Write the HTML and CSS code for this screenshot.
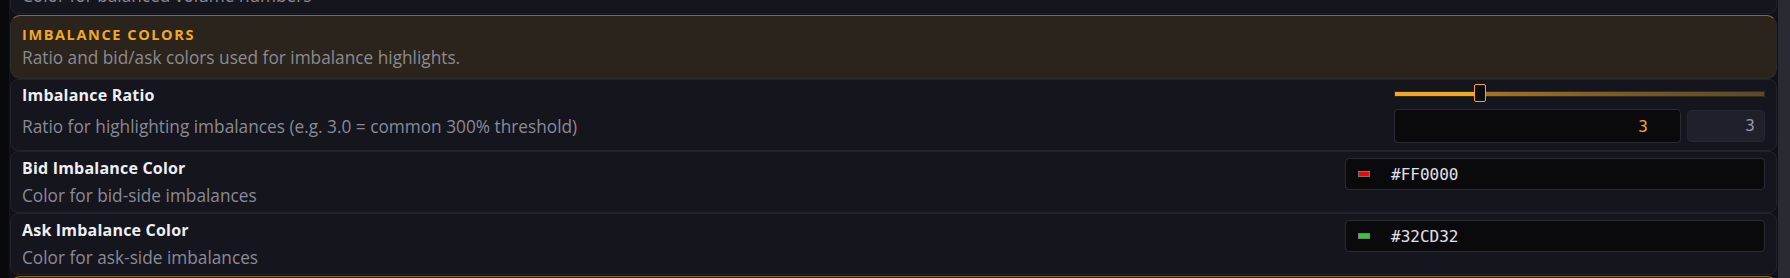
FILE: index.html
```html
<!DOCTYPE html>
<html lang="en">
<head>
    <meta charset="UTF-8">
    <title>Imbalance Colors</title>
    <link rel="stylesheet" href="styles.css">
</head>
<body>
<div class="app">
    <div class="rail"></div>
    <div class="panel">
        <div class="list">
            <div class="row row-cut">
                <div class="info">
                    <div class="name">Balanced Volume Color</div>
                    <div class="desc">Color for balanced volume numbers</div>
                </div>
            </div>

            <div class="section">
                <div class="section-title">Imbalance Colors</div>
                <div class="section-desc">Ratio and bid/ask colors used for imbalance highlights.</div>
            </div>

            <div class="row row-slider">
                <div class="info">
                    <div class="name">Imbalance Ratio</div>
                    <div class="desc">Ratio for highlighting imbalances (e.g. 3.0 = common 300% threshold)</div>
                </div>
                <div class="control slider-control">
                    <div class="slider">
                        <div class="track"></div>
                        <div class="thumb" style="left: 23.2%"></div>
                    </div>
                    <div class="number-line">
                        <input class="number-input" type="text" value="3">
                        <div class="readout">3</div>
                    </div>
                </div>
            </div>

            <div class="row">
                <div class="info">
                    <div class="name">Bid Imbalance Color</div>
                    <div class="desc">Color for bid-side imbalances</div>
                </div>
                <div class="control">
                    <div class="color-input">
                        <span class="swatch swatch-red"></span>
                        <span class="hex">#FF0000</span>
                    </div>
                </div>
            </div>

            <div class="row">
                <div class="info">
                    <div class="name">Ask Imbalance Color</div>
                    <div class="desc">Color for ask-side imbalances</div>
                </div>
                <div class="control">
                    <div class="color-input">
                        <span class="swatch swatch-green"></span>
                        <span class="hex">#32CD32</span>
                    </div>
                </div>
            </div>

            <div class="section">
                <div class="section-title">Volume Colors</div>
                <div class="section-desc">Colors for volume numbers.</div>
            </div>
        </div>
    </div>
    <div class="scrollbar"></div>
</div>
</body>
</html>
```

FILE: styles.css
```css
html, body {
    margin: 0;
    padding: 0;
}
body {
    font-family: "Open Sans", "Noto Sans", sans-serif;
    background-color: #101016;
    color: #ececf1;
}
.app {
    display: flex;
    height: 278px;
    overflow: hidden;
}
.rail {
    width: 9px;
    flex-shrink: 0;
    background-color: #09090b;
    border-right: 1px solid #141419;
}
.panel {
    flex: 1;
    overflow: hidden;
    padding-right: 1px;
}
.list {
    margin-top: -44px;
}
.scrollbar {
    width: 12px;
    flex-shrink: 0;
    background-color: #2a2a33;
}

.row {
    display: flex;
    justify-content: space-between;
    align-items: flex-start;
    padding: 6px 11px 5px 11px;
    background-color: #15151d;
    border: 1px solid #22222b;
    border-radius: 8px;
}
.info {
    display: flex;
    flex-direction: column;
    gap: 7px;
}
.row-cut {
    padding: 5px 11px 6px 11px;
}
.row-cut .info {
    gap: 3px;
}
.row-slider {
    padding: 5px 11px 7px 11px;
}
.row-slider .info {
    gap: 11px;
}
.name {
    font-size: 16px;
    font-weight: 700;
    line-height: 20px;
    letter-spacing: 0.2px;
    color: #eeeef3;
}
.desc {
    font-size: 17.25px;
    line-height: 22px;
    color: #8a8a97;
}

.section {
    margin-top: 1px;
    padding: 10px 11px 9px 11px;
    background-color: #2a241d;
    border: 1px solid #2b2a2d;
    border-top-color: #8a6a2c;
    border-radius: 10px;
}
.section-title {
    font-size: 14.5px;
    font-weight: 700;
    line-height: 18px;
    letter-spacing: 1.6px;
    text-transform: uppercase;
    color: #f4a720;
}
.section-desc {
    margin-top: 3px;
    font-size: 17.25px;
    line-height: 22px;
    color: #8d8a90;
}

.control {
    width: 420px;
    display: flex;
    flex-direction: column;
    align-items: flex-end;
}
.slider-control {
    width: 371px;
    margin-top: -1px;
    gap: 7px;
}
.slider {
    position: relative;
    width: 100%;
    height: 18px;
}
.track {
    margin-top: 7px;
    height: 4px;
    border: 1px solid #2e2a24;
    background: linear-gradient(to right, #f4a720 0%, #f4a720 23.2%, #a8741c 24%, #7c5a22 60%, #5e4826 100%);
}
.thumb {
    position: absolute;
    top: 0;
    width: 10px;
    height: 16px;
    margin-left: -6px;
    background-color: #0c0c11;
    border: 1px solid #f4a720;
    border-radius: 2px;
}
.number-line {
    display: flex;
    gap: 6px;
    width: 100%;
}
.number-input {
    flex: 1;
    height: 32px;
    box-sizing: content-box;
    padding: 0 32px 0 10px;
    background-color: #0a0a0d;
    border: 1px solid #2a2a32;
    border-radius: 4px;
    font-family: "DejaVu Sans Mono", monospace;
    font-size: 16px;
    color: #f4a720;
    text-align: right;
    outline: none;
    min-width: 0;
}
.readout {
    width: 67px;
    height: 30px;
    padding-right: 9px;
    margin-top: 1px;
    background-color: #20202a;
    border: 1px solid #262630;
    border-radius: 4px;
    font-family: "DejaVu Sans Mono", monospace;
    font-size: 16px;
    line-height: 30px;
    color: #9898a6;
    text-align: right;
}

.color-input {
    display: flex;
    align-items: center;
    width: 418px;
    height: 30px;
    background-color: #0a0a0d;
    border: 1px solid #2a2a32;
    border-radius: 4px;
}
.swatch {
    width: 10px;
    height: 4px;
    margin-left: 12px;
    border: 1px solid #77777f;
}
.swatch-red {
    background-color: #ff0000;
}
.swatch-green {
    background-color: #32cd32;
}
.hex {
    margin-left: 21px;
    font-family: "DejaVu Sans Mono", monospace;
    font-size: 16px;
    color: #e2e2ea;
}
```
